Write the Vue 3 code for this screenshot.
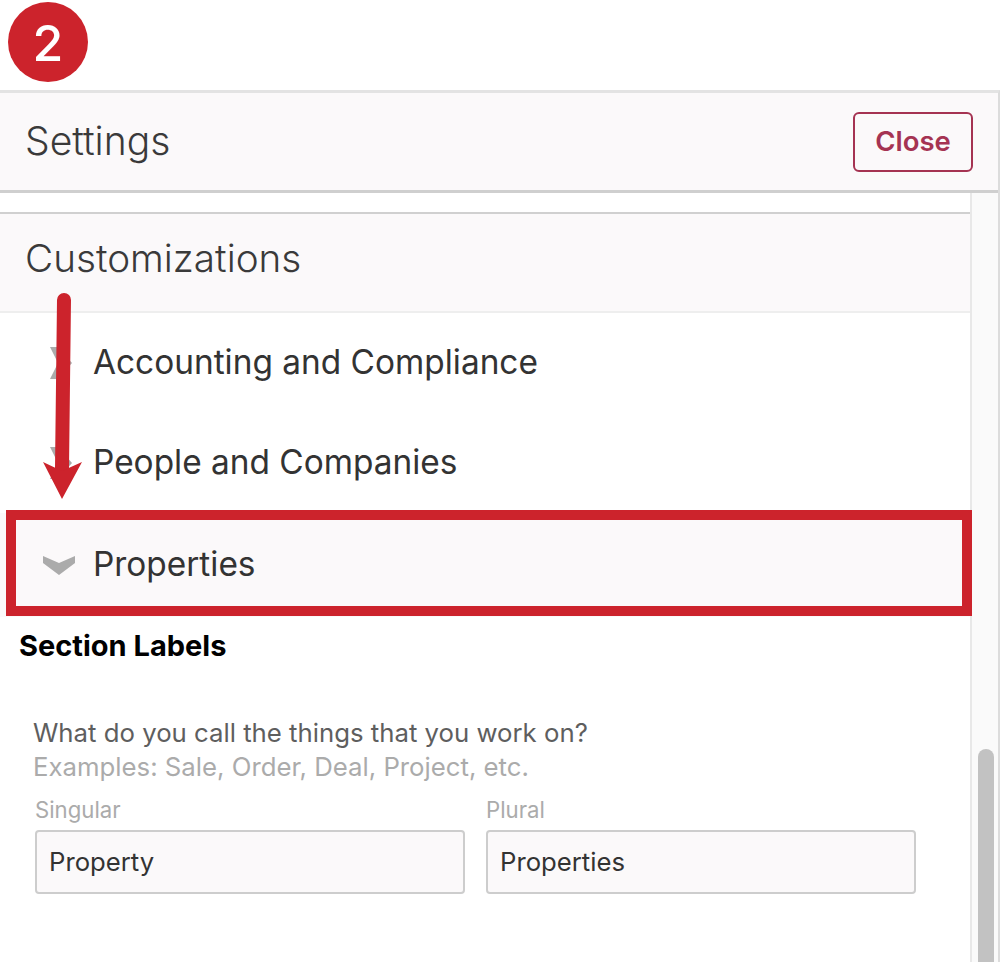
<script setup>
const rows = [
  { label: 'Accounting and Compliance', open: false },
  { label: 'People and Companies', open: false },
  { label: 'Properties', open: true },
]
const fields = [
  { label: 'Singular', value: 'Property' },
  { label: 'Plural', value: 'Properties' },
]
</script>

<template>
  <div class="page">
    <div class="badge-area"><span class="badge">2</span></div>
    <div class="panel">
      <header class="panel-head">
        <h1>Settings</h1>
        <button class="close">Close</button>
      </header>
      <div class="panel-body">
        <main class="content">
          <h2 class="section-head">Customizations</h2>
          <div v-for="r in rows" :key="r.label" class="row" :class="{ open: r.open }">
            <svg v-if="r.open" class="chev-down" width="34" height="20" viewBox="0 0 34 20">
              <path d="M1 1 L17 8 L33 1 L33 8 L17 20 L1 8 Z" fill="#ababab" />
            </svg>
            <svg v-else class="chev-right" width="22" height="32" viewBox="0 0 22 32">
              <path d="M0 0 L8 0 L22 16 L8 32 L0 32 L8 16 Z" fill="#ababab" />
            </svg>
            <span>{{ r.label }}</span>
          </div>
          <h3 class="labels-title">Section Labels</h3>
          <div class="form">
            <p class="q">What do you call the things that you work on?</p>
            <p class="ex">Examples: Sale, Order, Deal, Project, etc.</p>
            <div class="fields">
              <label v-for="f in fields" :key="f.label" class="field">
                <span>{{ f.label }}</span>
                <input :value="f.value" />
              </label>
            </div>
          </div>
        </main>
        <aside class="track"><div class="thumb"></div></aside>
      </div>
    </div>
    <div class="callout-box"></div>
    <svg class="arrow" width="50" height="210" viewBox="0 0 50 210">
      <path d="M21 7 L19 175" stroke="#cc232c" stroke-width="14" stroke-linecap="round" fill="none" />
      <path d="M0 169 L19 178 L39 169 L19 206 Z" fill="#cc232c" />
    </svg>
  </div>
</template>

<style>
html, body { margin: 0; background: #fff; }
</style>

<style scoped>
.page {
  position: relative;
  width: 1000px;
  height: 962px;
  overflow: hidden;
  font-family: Inter, "Liberation Sans", sans-serif;
  color: #333;
  background: #fff;
}
.badge-area { height: 90px; padding: 2px 0 0 8px; box-sizing: border-box; }
.badge {
  display: flex;
  align-items: center;
  justify-content: center;
  box-sizing: border-box;
  width: 80px;
  height: 80px;
  padding-top: 2px;
  border-radius: 50%;
  background: #cc232c;
  color: #fff;
  font-size: 50px;
  font-weight: 500;
  line-height: 1;
}
.panel {
  border-top: 3px solid #e3e3e3;
  border-right: 2px solid #dcdcdc;
  height: 869px;
  display: flex;
  flex-direction: column;
}
.panel-head {
  height: 97px;
  flex: none;
  display: flex;
  align-items: center;
  justify-content: space-between;
  padding: 0 25px;
  background: #fbf9fa;
  border-bottom: 3px solid #cfcfcf;
}
.panel-head h1 {
  margin: 0 0 3px;
  font-size: 39px;
  font-weight: 300;
  color: #3a3a3a;
}
.close {
  width: 120px;
  height: 60px;
  padding: 0 0 2px;
  border: 2px solid #a53352;
  border-radius: 6px;
  background: #fbf9fa;
  color: #a53352;
  font: 600 27.5px Inter, "Liberation Sans", sans-serif;
}
.panel-body { flex: 1; display: flex; min-height: 0; }
.content { flex: 1; min-width: 0; padding-top: 19px; }
.section-head {
  margin: 0;
  height: 97px;
  line-height: 88px;
  padding-left: 25px;
  font-size: 38.7px;
  font-weight: 300;
  color: #3a3a3a;
  background: #fbf9fa;
  border-top: 2px solid #d0d0d0;
  border-bottom: 2px solid #eee;
}
.row {
  height: 100px;
  display: flex;
  align-items: center;
  padding-left: 50px;
  font-size: 33.4px;
  color: #333;
  position: relative;
}
.row span { position: absolute; left: 93px; top: 50%; transform: translateY(-50%); margin-top: -1px; }
.row.open { height: 104px; background: #fbf9fa; padding-left: 42px; }
.labels-title {
  margin: 11px 0 0 19px;
  font-size: 29px;
  line-height: 36px;
  font-weight: 700;
  color: #000;
}
.form { padding: 52px 54px 0 33px; }
.q, .ex { margin: 0; font-size: 25.75px; line-height: 34px; }
.q { color: #5e5e5e; }
.ex { color: #ababab; }
.fields { display: flex; gap: 21px; margin-top: 11px; padding-left: 2px; }
.field { width: 430px; display: block; }
.field span { display: block; font-size: 22.2px; line-height: 30px; color: #ababab; }
.field input {
  display: block;
  box-sizing: border-box;
  width: 100%;
  height: 64px;
  margin-top: 5px;
  padding: 0 12px 2px;
  border: 2px solid #cdcdcd;
  border-radius: 4px;
  background: #fbf9fa;
  font: 400 25.7px Inter, "Liberation Sans", sans-serif;
  color: #333;
  outline: none;
}
.track {
  width: 26px;
  flex: none;
  background: #fafafa;
  border-left: 2px solid #e8e8e8;
  position: relative;
}
.thumb {
  position: absolute;
  left: 6px;
  top: 556px;
  width: 16px;
  height: 300px;
  border-radius: 8px;
  background: #c2c2c2;
}
.callout-box {
  position: absolute;
  left: 6px;
  top: 510px;
  width: 966px;
  height: 106px;
  box-sizing: border-box;
  border: 10px solid #cc232c;
}
.arrow { position: absolute; left: 43px; top: 293px; }
</style>
